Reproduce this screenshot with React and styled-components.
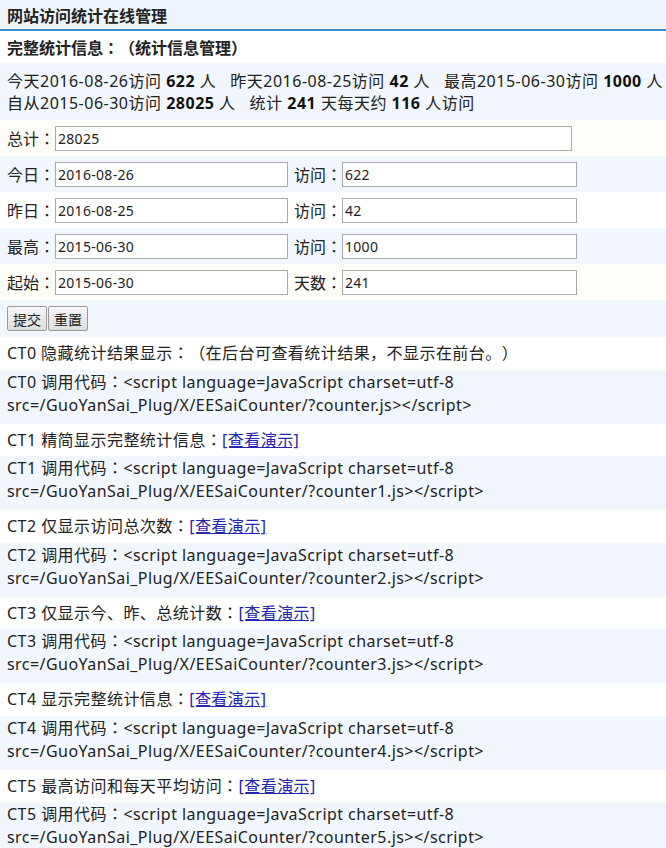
import React from 'react';
import styled, { createGlobalStyle } from 'styled-components';

const GlobalStyle = createGlobalStyle`
  html, body {
    margin: 0;
    padding: 0;
    background: #ffffff;
  }
  body {
    font-family: "Noto Sans", "Noto Sans CJK JP", sans-serif;
    color: #222;
    font-size: 16px;
    text-spacing-trim: space-all;
  }
`;

const tones = {
  blue: '#f1f7fc',
  white: '#ffffff',
  cream: '#fffdf7',
};

const Page = styled.div`
  width: 666px;
  overflow: hidden;
`;

const Header = styled.div`
  background: #eff6fb;
  border-bottom: 2px solid #3d8fd2;
  height: 29px;
  padding: 0 7px;
  display: flex;
  align-items: center;
  font-weight: 700;
  font-size: 16px;
  color: #222;
`;

const Row = styled.div`
  background: ${p => tones[p.$tone || 'white']};
  padding: 5px 7px 5.5px;
  line-height: 22px;
  font-size: 16px;
  letter-spacing: 0.45px;
  white-space: nowrap;
`;

const TitleRow = styled(Row)`
  font-weight: 700;
  letter-spacing: 0;
  padding: 6px 7px 4px;
`;

const StatsRow = styled(Row)`
  padding: 7px 7px 6px;
  line-height: 22px;
  letter-spacing: 0.5px;
`;

const CodeRow = styled(Row)`
  line-height: 23px;
  padding: 1px 7px 7px;
`;

const Num = styled.b`
  font-weight: 700;
  color: #111;
`;

const FormRow = styled.div`
  background: ${p => tones[p.$tone || 'white']};
  height: 36px;
  padding: 0 7px;
  display: flex;
  align-items: center;
  font-size: 16px;
`;

const Label = styled.span`
  width: 48px;
  flex: none;
  white-space: nowrap;
`;

const Field = styled.input`
  box-sizing: border-box;
  width: ${p => p.$w}px;
  height: 25px;
  border: 1px solid #a9a9a9;
  background: #fff;
  padding: 0 2px;
  font-family: "Noto Sans", sans-serif;
  font-size: 14px;
  letter-spacing: 0.3px;
  color: #222;
  margin: 0 6px 0 0;
  outline: none;
`;

const ButtonRow = styled.div`
  background: ${tones.blue};
  height: 37px;
  padding: 0 7px;
  display: flex;
  align-items: center;
  gap: 1px;
`;

const Btn = styled.button`
  height: 25px;
  padding: 0 5px;
  border: 1px solid #9a9a9a;
  border-radius: 2px;
  background: linear-gradient(#f7f7f7, #dddddd);
  font-family: "Noto Sans CJK JP", sans-serif;
  font-size: 14px;
  color: #222;
`;

const Link = styled.a`
  color: #2424b4;
  text-decoration: underline;
`;

const demos = [
  { id: 'CT1', text: '精简显示完整统计信息：', file: 'counter1' },
  { id: 'CT2', text: '仅显示访问总次数：', file: 'counter2' },
  { id: 'CT3', text: '仅显示今、昨、总统计数：', file: 'counter3' },
  { id: 'CT4', text: '显示完整统计信息：', file: 'counter4' },
  { id: 'CT5', text: '最高访问和每天平均访问：', file: 'counter5' },
];

const Code = ({ id, file }) => (
  <CodeRow $tone="blue">
    {id} 调用代码：&lt;script language=JavaScript charset=utf-8
    <br />
    src=/GuoYanSai_Plug/X/EESaiCounter/?{file}.js&gt;&lt;/script&gt;
  </CodeRow>
);

export default function App() {
  return (
    <Page>
      <GlobalStyle />
      <Header>网站访问统计在线管理</Header>
      <TitleRow>完整统计信息：（统计信息管理）</TitleRow>
      <StatsRow $tone="blue">
        今天2016-08-26访问 <Num>622</Num> 人&nbsp;&nbsp;&nbsp;昨天2016-08-25访问 <Num>42</Num> 人&nbsp;&nbsp;&nbsp;最高2015-06-30访问 <Num>1000</Num> 人
        <br />
        自从2015-06-30访问 <Num>28025</Num> 人&nbsp;&nbsp;&nbsp;统计 <Num>241</Num> 天每天约 <Num>116</Num> 人访问
      </StatsRow>
      <FormRow $tone="cream">
        <Label>总计：</Label>
        <Field $w={517} defaultValue="28025" />
      </FormRow>
      <FormRow $tone="blue">
        <Label>今日：</Label>
        <Field $w={233} defaultValue="2016-08-26" />
        <Label>访问：</Label>
        <Field $w={235} defaultValue="622" />
      </FormRow>
      <FormRow $tone="white">
        <Label>昨日：</Label>
        <Field $w={233} defaultValue="2016-08-25" />
        <Label>访问：</Label>
        <Field $w={235} defaultValue="42" />
      </FormRow>
      <FormRow $tone="blue">
        <Label>最高：</Label>
        <Field $w={233} defaultValue="2015-06-30" />
        <Label>访问：</Label>
        <Field $w={235} defaultValue="1000" />
      </FormRow>
      <FormRow $tone="cream">
        <Label>起始：</Label>
        <Field $w={233} defaultValue="2015-06-30" />
        <Label>天数：</Label>
        <Field $w={235} defaultValue="241" />
      </FormRow>
      <ButtonRow>
        <Btn type="submit">提交</Btn>
        <Btn type="reset">重置</Btn>
      </ButtonRow>
      <Row>CT0 隐藏统计结果显示：（在后台可查看统计结果，不显示在前台。）</Row>
      <Code id="CT0" file="counter" />
      {demos.map(d => (
        <React.Fragment key={d.id}>
          <Row>
            {d.id} {d.text}
            <Link href="#">[查看演示]</Link>
          </Row>
          <Code id={d.id} file={d.file} />
        </React.Fragment>
      ))}
    </Page>
  );
}
